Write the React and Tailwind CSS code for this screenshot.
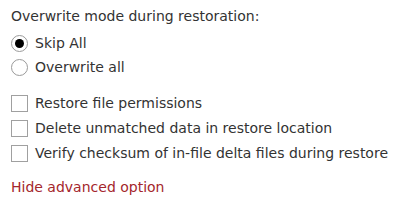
export default function App() {
  const font = { fontFamily: '"DejaVu Sans", Verdana, sans-serif' };
  return (
    <div className="w-[400px] h-[210px] bg-white text-[#333] text-[14px] pl-[11px] pt-[7px]" style={font}>
      <div className="leading-[18px]">Overwrite mode during restoration:</div>
      <div className="mt-[10px] flex flex-col gap-[8px]">
        <label className="flex items-center gap-[7px] h-[16px]">
          <span className="w-[17px] h-[17px] rounded-full border border-[#9a9a9a] flex items-center justify-center">
            <span className="w-[9px] h-[9px] rounded-full bg-black" />
          </span>
          <span>Skip All</span>
        </label>
        <label className="flex items-center gap-[7px] h-[16px]">
          <span className="w-[17px] h-[17px] rounded-full border border-[#9a9a9a]" />
          <span>Overwrite all</span>
        </label>
      </div>
      <div className="mt-[20px] flex flex-col gap-[8px]">
        {["Restore file permissions", "Delete unmatched data in restore location", "Verify checksum of in-file delta files during restore"].map((t) => (
          <label key={t} className="flex items-center gap-[7px] h-[17px]">
            <span className="w-[17px] h-[17px] border-[1.5px] border-[#a0a0a0]" />
            <span>{t}</span>
          </label>
        ))}
      </div>
      <div className="mt-[16px] leading-[18px] text-[#a4262c]">Hide advanced option</div>
    </div>
  );
}
